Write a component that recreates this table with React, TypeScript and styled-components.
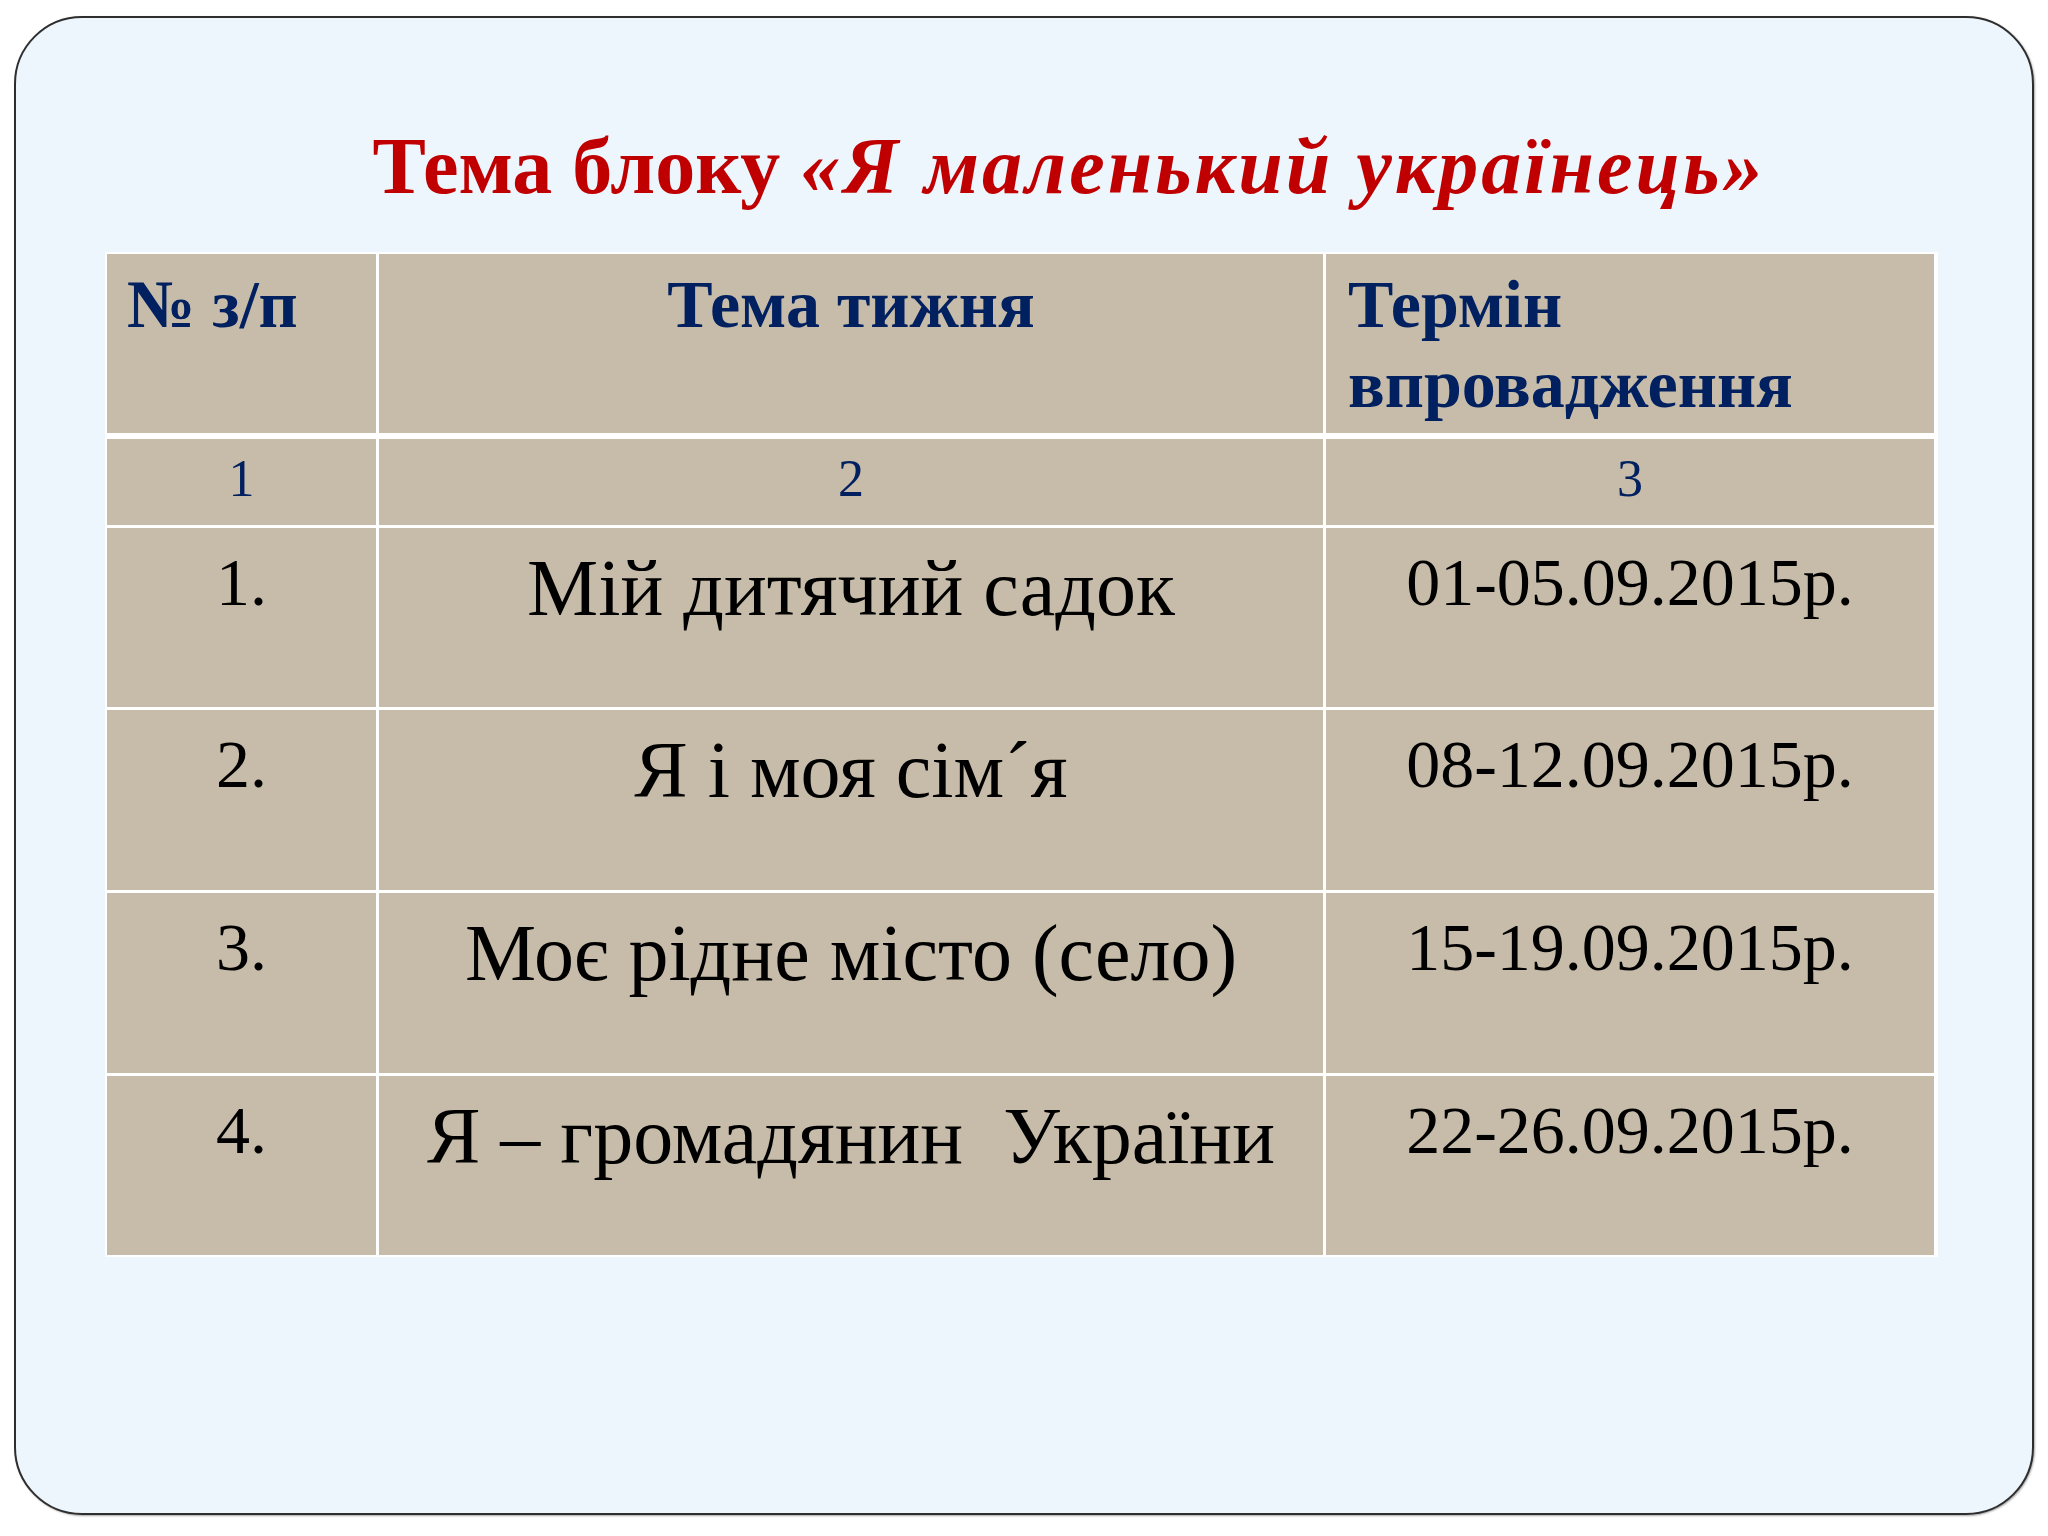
import React from "react";
import styled, { createGlobalStyle } from "styled-components";

const Global = createGlobalStyle`
  html, body { margin: 0; padding: 0; background: #ffffff; }
  body { font-family: "Liberation Serif", "Times New Roman", serif; }
`;

const Page = styled.div`
  width: 2048px;
  height: 1536px;
  box-sizing: border-box;
  padding: 16px 14px 21px 14px;
`;

const Frame = styled.div`
  box-sizing: border-box;
  height: 100%;
  border: 2px solid #2e2e2e;
  border-radius: 68px;
  background: #edf5fd;
  box-shadow: 1px 1px 2px rgba(0, 0, 0, 0.35);
  display: flex;
  flex-direction: column;
  padding-top: 102px;
`;

const Title = styled.h1`
  margin: 0;
  padding-left: 90px;
  text-align: center;
  font-family: "Liberation Serif", "Times New Roman", serif;
  font-size: 80px;
  line-height: 92px;
  font-weight: bold;
  color: #c00000;
  white-space: pre;
`;

const Accent = styled.span`
  font-style: italic;
  letter-spacing: 3px;
`;

const Table = styled.div`
  margin: 40px 0 0 89px;
  width: 1833px;
  box-sizing: border-box;
  padding: 2px;
  background: #ffffff;
  display: grid;
  grid-template-columns: 269px 944px 608px;
  grid-template-rows: 179px 89px 179px 180px 180px 179px;
  column-gap: 3px;
  row-gap: 3px;
`;

type Align = "left" | "center";

const Cell = styled.div<{ $align: Align; $gapAfterHeader?: boolean }>`
  background: #c7bca9;
  text-align: ${(p) => p.$align};
  box-sizing: border-box;
  white-space: pre-wrap;
  margin-top: ${(p) => (p.$gapAfterHeader ? "3px" : "0")};
`;

const HeadCell = styled(Cell)<{ $indent: number }>`
  padding: 10px 0 0 ${(p) => p.$indent}px;
  color: #002060;
  font-size: 68px;
  line-height: 80px;
  font-weight: bold;
`;

const IndexCell = styled(Cell)`
  padding-top: 10px;
  color: #002060;
  font-size: 52px;
  line-height: 60px;
`;

const DataCell = styled(Cell)<{ $big?: boolean }>`
  padding-top: ${(p) => (p.$big ? 14 : 15)}px;
  color: #000000;
  font-size: ${(p) => (p.$big ? 80 : 68)}px;
  line-height: 1.15;
`;

const rows = [
  ["1.", "Мій дитячий садок", "01-05.09.2015р."],
  ["2.", "Я і моя сім´я", "08-12.09.2015р."],
  ["3.", "Моє рідне місто (село)", "15-19.09.2015р."],
  ["4.", "Я – громадянин  України", "22-26.09.2015р."],
];

export default function App() {
  return (
    <>
      <Global />
      <Page>
        <Frame>
          <Title>
            Тема блоку <Accent>«Я маленький українець»</Accent>
          </Title>
          <Table>
            <HeadCell $align="left" $indent={20}>№ з/п</HeadCell>
            <HeadCell $align="center" $indent={0}>Тема тижня</HeadCell>
            <HeadCell $align="left" $indent={22}>{"Термін\nвпровадження"}</HeadCell>
            <IndexCell $align="center" $gapAfterHeader>1</IndexCell>
            <IndexCell $align="center" $gapAfterHeader>2</IndexCell>
            <IndexCell $align="center" $gapAfterHeader>3</IndexCell>
            {rows.map((r) => (
              <React.Fragment key={r[0]}>
                <DataCell $align="center">{r[0]}</DataCell>
                <DataCell $align="center" $big>{r[1]}</DataCell>
                <DataCell $align="center">{r[2]}</DataCell>
              </React.Fragment>
            ))}
          </Table>
        </Frame>
      </Page>
    </>
  );
}
